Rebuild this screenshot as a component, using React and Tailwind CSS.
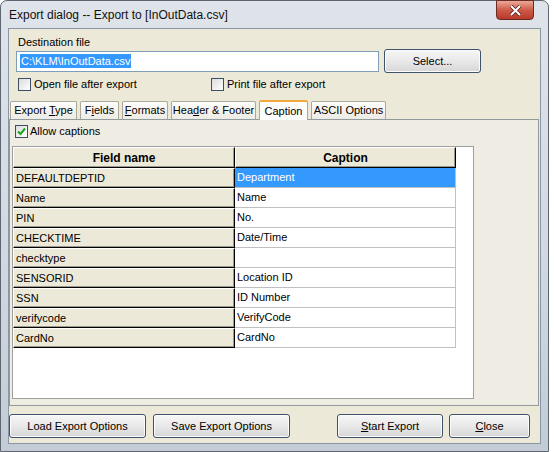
import React from "react";

const rows = [
  ["DEFAULTDEPTID", "Department"],
  ["Name", "Name"],
  ["PIN", "No."],
  ["CHECKTIME", "Date/Time"],
  ["checktype", ""],
  ["SENSORID", "Location ID"],
  ["SSN", "ID Number"],
  ["verifycode", "VerifyCode"],
  ["CardNo", "CardNo"],
];

function Check({ checked }) {
  return (
    <span className="w-[13px] h-[13px] border border-[#3c4f63] bg-gradient-to-br from-[#dcdcdc] to-[#ffffff] flex items-center justify-center shrink-0">
      {checked && (
        <svg width="11" height="11" viewBox="0 0 11 11">
          <path d="M2 5.5 L4.5 8 L9 2.5" fill="none" stroke="#21a121" strokeWidth="2" />
        </svg>
      )}
    </span>
  );
}

function Btn({ w, children }) {
  return (
    <div
      className={`${w} h-[24px] rounded-[3px] border border-[#3e536b] bg-gradient-to-b from-[#f6f6f6] via-[#e9e9e9] to-[#d6d6d6] shadow-[inset_0_0_0_1px_#fcfcfc] flex items-center justify-center text-[11px]`}
    >
      <span>{children}</span>
    </div>
  );
}

function Tab({ w, active, children }) {
  return active ? (
    <div
      className={`${w} h-[20px] border border-b-0 border-[#a9a7a0] border-t-2 border-t-[#f2a93b] bg-[#fcfcfa] rounded-t-[2px] flex items-center justify-center text-[11px] z-10 -mb-[1px]`}
    >
      <span>{children}</span>
    </div>
  ) : (
    <div
      className={`${w} h-[18px] mt-[2px] border border-b-0 border-[#aca899] bg-gradient-to-b from-[#fdfdfb] to-[#ecebe5] rounded-t-[2px] flex items-center justify-center text-[11px]`}
    >
      <span>{children}</span>
    </div>
  );
}

const raised =
  "bg-[#ece9d8] border-t border-l border-t-white border-l-white border-r border-b border-r-black border-b-black shadow-[inset_-1px_-1px_0_#9d9a8e]";

export default function App() {
  return (
    <div className="w-[554px] h-[452px] bg-white font-['Liberation_Sans',Arial,sans-serif] text-black">
      <div className="relative w-[549px] h-[452px] rounded-t-[7px] border border-[#5d6671] bg-gradient-to-b from-[#dfe4ea] via-[#d3dae3] to-[#c3ccd6] px-[7px] pb-[7px] flex flex-col">
        <div className="h-[27px] flex items-center pl-[1px] text-[12px] text-[#111]">
          Export dialog -- Export to [InOutData.csv]
        </div>
        <div className="absolute top-[-1px] right-[14px] w-[38px] h-[20px] rounded-b-[4px] border border-[#6b2a22] bg-gradient-to-b from-[#e9a99a] via-[#cf5a48] to-[#b8392a] flex items-center justify-center">
          <svg width="13" height="11" viewBox="0 0 13 11">
            <path d="M2 1 L11 10 M11 1 L2 10" stroke="#5a1f18" strokeWidth="3.6" />
            <path d="M2 1 L11 10 M11 1 L2 10" stroke="#ffffff" strokeWidth="2" />
          </svg>
        </div>

        <div className="flex-1 bg-[#ece9d8] border border-[#8a96a3] flex flex-col text-[11px]">
          <div className="mt-[7px] ml-[9px] h-[13px] leading-[13px] text-[11px]">Destination file</div>
          <div className="mt-[1px] ml-[7px] h-[22px] flex items-center">
            <div className="w-[363px] h-[21px] border border-[#7f9db9] bg-white flex items-center pl-[3px]">
              <span className="bg-[#3399ff] text-white leading-[14px] px-[1px]">C:\KLM\InOutData.csv</span>
            </div>
            <div className="ml-[5px]">
              <Btn w="w-[97px]">Select...</Btn>
            </div>
          </div>
          <div className="mt-[5px] ml-[9px] h-[14px] flex items-center">
            <Check />
            <span className="ml-[3px] w-[177px]">Open file after export</span>
            <Check />
            <span className="ml-[3px]">Print file after export</span>
          </div>

          <div className="mt-[8px] ml-[1px] flex items-end gap-[3px] h-[20px]">
            <Tab w="w-[67px]">
              Export <span className="underline">T</span>ype
            </Tab>
            <Tab w="w-[39px]">
              F<span className="underline">i</span>elds
            </Tab>
            <Tab w="w-[46px]">
              <span className="underline">F</span>ormats
            </Tab>
            <Tab w="w-[85px]">
              Hea<span className="underline">d</span>er &amp; Footer
            </Tab>
            <Tab w="w-[49px]" active>
              Caption
            </Tab>
            <Tab w="w-[75px]">ASCII Options</Tab>
          </div>

          <div className="w-[530px] h-[287px] border border-[#919b9c] bg-[#efede3] flex flex-col pl-[2px] pt-[4px]">
            <div className="ml-[3px] flex items-center h-[14px]">
              <Check checked />
              <span className="ml-[2px]">Allow captions</span>
            </div>
            <div className="mt-[8px] w-[462px] h-[253px] border border-[#a0a0a0] bg-white">
              <div className="flex h-[21px]">
                <div className={`w-[222px] ${raised} flex items-center justify-center font-bold text-[12px]`}>
                  Field name
                </div>
                <div className={`w-[221px] ${raised} flex items-center justify-center font-bold text-[12px]`}>
                  Caption
                </div>
              </div>
              {rows.map(([f, c], i) => (
                <div key={f} className="flex h-[20px]">
                  <div className={`w-[222px] ${raised} flex items-center pl-[2px]`}>{f}</div>
                  <div
                    className={`w-[221px] border-r border-b border-[#c0c0c0] flex items-center pl-[2px] ${
                      i === 0 ? "bg-[#3399ff] text-white" : "bg-white"
                    }`}
                  >
                    {c}
                  </div>
                </div>
              ))}
            </div>
          </div>

          <div className="mt-[8px] flex items-center h-[24px]">
            <Btn w="w-[137px]">Load Export Options</Btn>
            <div className="ml-[7px]">
              <Btn w="w-[137px]">Save Export Options</Btn>
            </div>
            <div className="ml-[47px]">
              <Btn w="w-[106px]">
                <span className="underline">S</span>tart Export
              </Btn>
            </div>
            <div className="ml-[6px]">
              <Btn w="w-[81px]">
                <span className="underline">C</span>lose
              </Btn>
            </div>
          </div>
        </div>
      </div>
    </div>
  );
}
